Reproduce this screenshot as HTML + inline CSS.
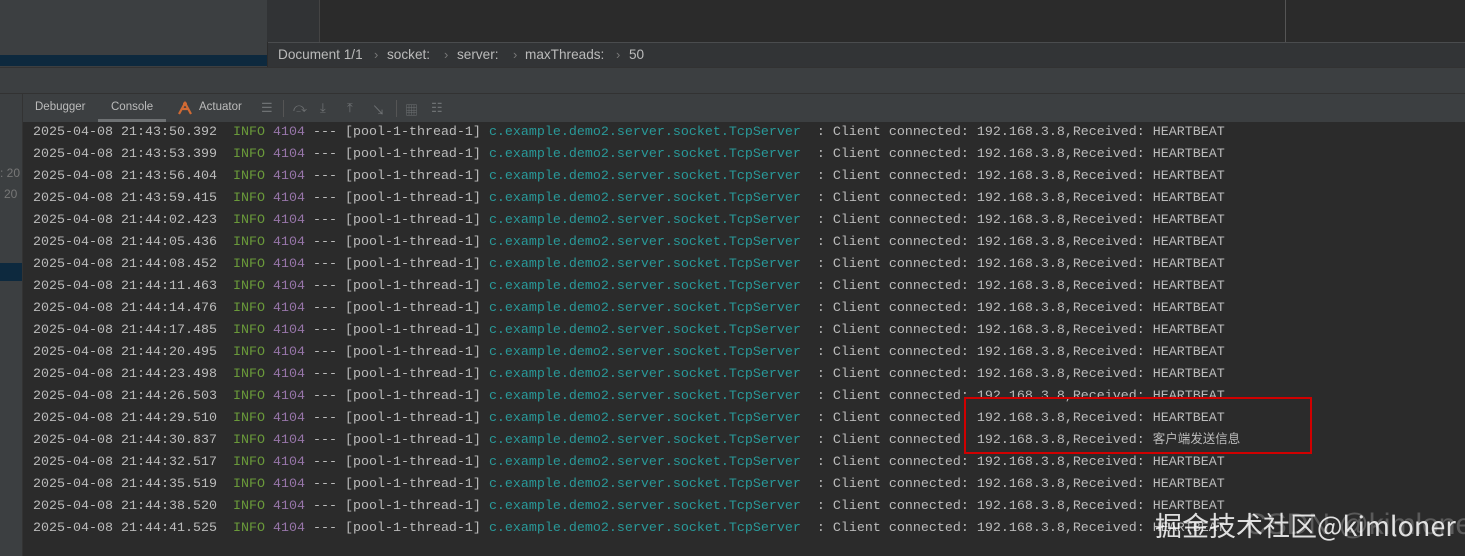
<!DOCTYPE html>
<html><head><meta charset="utf-8"><style>
*{margin:0;padding:0;box-sizing:border-box}
body{width:1465px;height:556px;overflow:hidden;background:#2b2b2b;position:relative;font-family:"Liberation Sans","Noto Sans CJK SC",sans-serif}
.a{position:absolute}
.row{position:absolute;left:33px;height:22px;line-height:22px;font-family:"Liberation Mono","Noto Sans CJK SC",monospace;font-size:13.33px;color:#bbbbbb;white-space:pre;overflow:hidden}
.g{color:#6a9a3a}.p{color:#9876aa}.c{color:#299999}
.cn{font-family:"Noto Sans CJK SC",sans-serif;font-size:12.5px;line-height:1;display:inline-block;vertical-align:middle;margin-top:-3px}
.ic{position:absolute;top:100px;color:#6e7173;font-size:13px}
.bc{position:absolute;top:46px;font-size:13.6px;color:#bbbbbb;line-height:17px;white-space:pre}
.sp{position:absolute;top:46px;font-size:13px;color:#777;line-height:17px}
</style></head><body>
<div class="a" style="left:0;top:0;width:267px;height:67px;background:#3c3f41"></div>
<div class="a" style="left:0;top:55px;width:267px;height:11px;background:#0d293e"></div>
<div class="a" style="left:267px;top:0;width:52px;height:42px;background:#313335"></div>
<div class="a" style="left:319px;top:0;width:1px;height:42px;background:#444"></div>
<div class="a" style="left:1285px;top:0;width:1px;height:42px;background:#555"></div>
<div class="a" style="left:267px;top:42px;width:1198px;height:25px;background:#323436;border-top:1px solid #4a4c4e"></div>
<div class="a" style="left:267px;top:42px;width:1px;height:25px;background:#2b2b2b"></div>
<div class="bc" style="left:278px">Document 1/1</div>
<div class="sp" style="left:374px">›</div>
<div class="bc" style="left:387px">socket:</div>
<div class="sp" style="left:444px">›</div>
<div class="bc" style="left:457px">server:</div>
<div class="sp" style="left:513px">›</div>
<div class="bc" style="left:525px">maxThreads:</div>
<div class="sp" style="left:616px">›</div>
<div class="bc" style="left:629px">50</div>
<div class="a" style="left:0;top:67px;width:1465px;height:26px;background:#3c3f41;border-top:1px solid #323232"></div>
<div class="a" style="left:0;top:93px;width:1465px;height:29px;background:#3c3f41;border-top:1px solid #323232"></div>
<div class="a" style="left:22px;top:94px;width:1px;height:462px;background:#333"></div>
<div class="a" style="left:0;top:122px;width:22px;height:434px;background:#3c3f41"></div>
<div class="a" style="left:0;top:263px;width:22px;height:18px;background:#0d293e"></div>
<div class="a" style="left:0;top:166px;font-size:12px;color:#777">: 20</div>
<div class="a" style="left:4px;top:187px;font-size:12px;color:#777">20</div>
<div class="a" style="left:35px;top:101px;font-size:11.5px;color:#bbb">Debugger</div>
<div class="a" style="left:111px;top:101px;font-size:11.5px;color:#bbb">Console</div>
<div class="a" style="left:98px;top:119px;width:68px;height:3px;background:#6e7173"></div>
<svg class="a" style="left:177px;top:100px" width="16" height="16"><path d="M2 14 L8 3 L14 14 M5 9 L11 9" stroke="#d06a34" stroke-width="2.2" fill="none"/><circle cx="8" cy="4" r="2" fill="#d06a34"/></svg>
<div class="a" style="left:199px;top:101px;font-size:11.5px;color:#bbb">Actuator</div>
<div class="ic" style="left:261px">☰</div>
<div class="a" style="left:283px;top:100px;width:1px;height:17px;background:#555"></div>
<div class="ic" style="left:293px">⤼</div>
<div class="ic" style="left:320px">⤓</div>
<div class="ic" style="left:347px">⤒</div>
<div class="ic" style="left:372px">↘</div>
<div class="a" style="left:396px;top:100px;width:1px;height:17px;background:#555"></div>
<div class="ic" style="left:405px">▦</div>
<div class="ic" style="left:431px">☷</div>
<div id="log"></div>
<script>
var t=["43:50.392","43:53.399","43:56.404","43:59.415","44:02.423","44:05.436","44:08.452","44:11.463","44:14.476","44:17.485","44:20.495","44:23.498","44:26.503","44:29.510","44:30.837","44:32.517","44:35.519","44:38.520","44:41.525"];
var h="";for(var i=0;i<t.length;i++){var m=i==14?'<span class="cn">客户端发送信息</span>':'HEARTBEAT';
h+='<div class="row" style="top:'+(122+22*i)+'px">2025-04-08 21:'+t[i]+'  <span class="g">INFO</span> <span class="p">4104</span> --- [pool-1-thread-1] <span class="c">c.example.demo2.server.socket.TcpServer</span>  : Client connected: 192.168.3.8,Received: '+m+'</div>';}
document.getElementById("log").innerHTML=h;
</script>
<div class="a" style="left:964px;top:397px;width:348px;height:57px;border:2px solid #d00000"></div>
<div class="a" style="left:1245px;top:508px;font-size:30px;color:rgba(200,200,200,0.3);white-space:nowrap">CSDN @kimloner</div>
<div class="a" style="left:1155px;top:505px;font-size:27px;color:rgba(255,255,255,0.85);white-space:nowrap;font-family:'Noto Sans CJK SC',sans-serif">掘金技术社区@kimloner</div>
</body></html>
